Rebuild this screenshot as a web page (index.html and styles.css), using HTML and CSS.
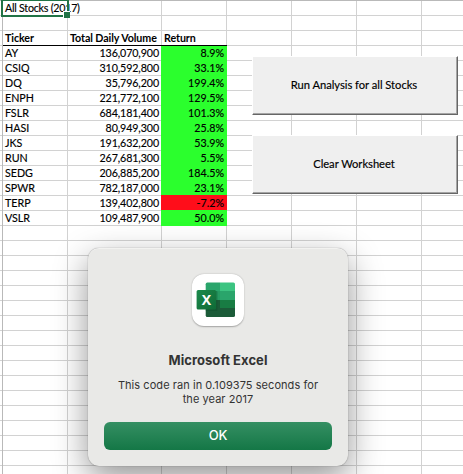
FILE: index.html
```
<!DOCTYPE html>
<html lang="en">
<head>
<meta charset="utf-8">
<title>All Stocks</title>
<link rel="stylesheet" href="styles.css">
</head>
<body>
<main class="sheet">
  <div class="content">
    <table class="stocks">
      <colgroup><col class="c-ticker"><col class="c-volume"><col class="c-return"></colgroup>
      <tr class="title"><td>All Stocks (2017)</td><td></td><td></td></tr>
      <tr><td></td><td></td><td></td></tr>
      <tr class="head"><th>Ticker</th><th>Total Daily Volume</th><th>Return</th></tr>
      <tr><td>AY</td><td>136,070,900</td><td class="up">8.9%</td></tr>
      <tr><td>CSIQ</td><td>310,592,800</td><td class="up">33.1%</td></tr>
      <tr><td>DQ</td><td>35,796,200</td><td class="up">199.4%</td></tr>
      <tr><td>ENPH</td><td>221,772,100</td><td class="up">129.5%</td></tr>
      <tr><td>FSLR</td><td>684,181,400</td><td class="up">101.3%</td></tr>
      <tr><td>HASI</td><td>80,949,300</td><td class="up">25.8%</td></tr>
      <tr><td>JKS</td><td>191,632,200</td><td class="up">53.9%</td></tr>
      <tr><td>RUN</td><td>267,681,300</td><td class="up">5.5%</td></tr>
      <tr><td>SEDG</td><td>206,885,200</td><td class="up">184.5%</td></tr>
      <tr><td>SPWR</td><td>782,187,000</td><td class="up">23.1%</td></tr>
      <tr><td>TERP</td><td>139,402,800</td><td class="down">-7.2%</td></tr>
      <tr><td>VSLR</td><td>109,487,900</td><td class="up">50.0%</td></tr>
    </table>
    <div class="macros">
      <button class="macro">Run Analysis for all Stocks</button>
      <button class="macro">Clear Worksheet</button>
    </div>
  </div>
  <div class="selection"></div>
  <section class="dialog">
    <svg class="app-icon" width="52" height="52" viewBox="0 0 52 52">
      <defs>
        <linearGradient id="tile" x1="0" y1="0" x2="1" y2="1"><stop offset="0" stop-color="#1c8a4c"/><stop offset="1" stop-color="#0f6a36"/></linearGradient>
        <clipPath id="book"><rect x="13.7" y="8.6" width="29.3" height="34.4" rx="1.6"/></clipPath>
      </defs>
      <g clip-path="url(#book)">
        <rect x="13" y="8" width="15" height="9" fill="#2aa56b"/>
        <rect x="28" y="8" width="16" height="9" fill="#3cc481"/>
        <rect x="13" y="17" width="15" height="9" fill="#269a62"/>
        <rect x="28" y="17" width="16" height="9" fill="#2aa56b"/>
        <rect x="13" y="26" width="15" height="18" fill="#1b5b38"/>
        <rect x="28" y="26" width="16" height="8" fill="#187c43"/>
        <rect x="28" y="34" width="16" height="10" fill="#1b5b38"/>
        <path d="M13 17h11.500q1 0 1 1v18q0 1-1 1H13z" fill="#0b4a28" opacity=".35"/>
      </g>
      <rect x="4.600" y="16" width="19.500" height="19.500" rx="1.500" fill="url(#tile)"/>
      <text class="icon-x" x="14.300" y="30.900" text-anchor="middle">X</text>
    </svg>
    <h1>Microsoft Excel</h1>
    <p>This code ran in 0.109375 seconds for<br>the year 2017</p>
    <button class="ok">OK</button>
  </section>
</main>
</body>
</html>
```
FILE: styles.css
```
* { box-sizing: border-box; }
body { margin: 0; background: #fff; }
.sheet {
  position: relative;
  width: 463px;
  height: 474px;
  overflow: hidden;
  padding: 1px 0 0 3px;
  font-family: Lato, "Liberation Sans", sans-serif;
  font-size: 10.7px;
  color: #000;
  background:
    linear-gradient(#b9b9b9, #b9b9b9) 0 0 / 100% 1px no-repeat,
    linear-gradient(#b9b9b9, #b9b9b9) 2px 0 / 1px 100% no-repeat,
    linear-gradient(#d2d2d2, #d2d2d2) 67px 0 / 1px 100% no-repeat,
    linear-gradient(#d2d2d2, #d2d2d2) 161px 0 / 1px 100% no-repeat,
    repeating-linear-gradient(90deg, transparent 0 64px, #d2d2d2 64px 65px) 162px 0 / 301px 100% no-repeat,
    repeating-linear-gradient(#d2d2d2 0 1px, transparent 1px 15px),
    #fff;
}
.content { display: flex; align-items: flex-start; }
.stocks { table-layout: fixed; width: 224px; border-collapse: collapse; flex: none; }
.c-ticker { width: 65px; }
.c-volume { width: 93px; }
.c-return { width: 66px; }
.stocks tr { height: 15px; }
.stocks td, .stocks th {
  height: 15px;
  padding: 0 3px 2px 2px;
  line-height: 13px;
  vertical-align: top;
  text-align: right;
  white-space: nowrap;
  -webkit-text-stroke: .15px;
}
.stocks td:first-child, .stocks th { text-align: left; }
.stocks td:nth-child(2) { padding-right: 2px; letter-spacing: -.1px; }
.stocks th { font-weight: 700; letter-spacing: -.08px; box-shadow: 0 -1px 0 #000 inset; -webkit-text-stroke: 0; }
.stocks th:nth-child(3) { padding-left: 3px; }
.stocks .title td:first-child {
  background: linear-gradient(#fff, #fff) 64px 0 / 1px 14px no-repeat;
  letter-spacing: -.24px;
}
.up { background: #2bff2d; box-shadow: 0 -1px 0 #2bff2d; }
.down { background: #ff0d1a; box-shadow: 0 -1px 0 #ff0d1a; }
.head + tr .up { box-shadow: none; }
.macros { display: flex; flex-direction: column; gap: 20px; padding: 55px 0 0 25px; }
.macro {
  width: 206px;
  height: 59px;
  margin: 0;
  padding: 0 2px 2px 0;
  border: 1px solid;
  border-color: #fff #666 #666 #fff;
  box-shadow: inset -1px -1px 0 #a5a5a5;
  background: #efefef;
  font: 11.2px Lato, "Liberation Sans", sans-serif;
  letter-spacing: -.03px;
  -webkit-text-stroke: .15px;
  color: #000;
}
.selection {
  position: absolute;
  left: 1px;
  top: 0;
  width: 68px;
  height: 17px;
  border: 2px solid #217346;
  border-top-width: 1px;
}
.selection::after {
  content: "";
  position: absolute;
  right: -3px;
  bottom: -3px;
  width: 6px;
  height: 6px;
  background: #217346;
  border: 1px solid #fff;
  border-width: 1px 0 0 1px;
}
.dialog {
  position: absolute;
  left: 88px;
  top: 248px;
  width: 260px;
  height: 218px;
  padding: 26px 16px 16px;
  display: flex;
  flex-direction: column;
  align-items: center;
  border-radius: 11px;
  background: #e9e9e7;
  box-shadow: 0 0 1px rgba(0,0,0,.55), inset 0 1px 0 rgba(255,255,255,.4), 0 12px 34px rgba(0,0,0,.42);
  font-family: Inter, "Liberation Sans", sans-serif;
  color: #333;
}
.app-icon { flex: none; border-radius: 12px; background: #fff; box-shadow: 0 .5px 1.5px rgba(0,0,0,.3); }
.icon-x { font: 700 14px "Open Sans", sans-serif; fill: #fff; }
.dialog h1 { margin: 26px 0 0; font-size: 13px; line-height: 16px; font-weight: 700; letter-spacing: .06px; white-space: nowrap; }
.dialog p { margin: 10px 0 0; font-size: 11px; line-height: 14px; letter-spacing: .06px; text-align: center; white-space: nowrap; }
.ok {
  width: 228px;
  height: 28px;
  margin: auto 0 0;
  padding: 0 0 2px;
  border: 0;
  border-radius: 6px;
  background: linear-gradient(#358f63, #147746);
  color: #fff;
  font: 500 13px Inter, "Liberation Sans", sans-serif;
  letter-spacing: -.3px;
}
```
